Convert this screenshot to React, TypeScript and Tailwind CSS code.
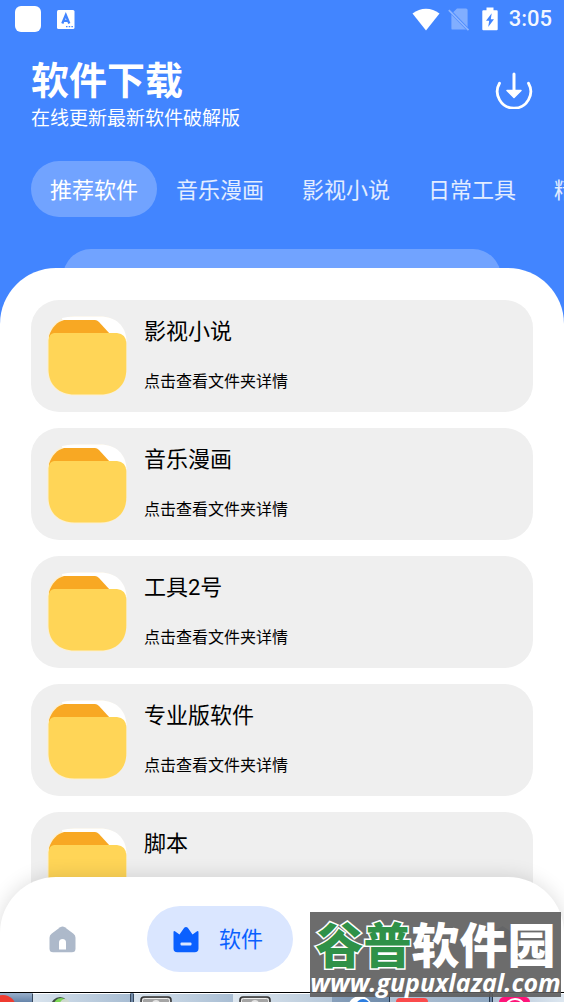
import { useState } from "react";

const TABS = ["推荐软件", "音乐漫画", "影视小说", "日常工具", "精品游戏"];
const FOLDERS = ["影视小说", "音乐漫画", "工具2号", "专业版软件", "脚本"];

function StatusBar() {
  return (
    <div className="flex h-[38px] items-center justify-between pl-[15px] pr-3">
      <div className="flex items-center gap-4">
        <span className="size-[26px] rounded-md bg-white" />
        <svg viewBox="0 0 18 19" className="h-[19px] w-[18px]" aria-hidden="true">
          <rect width="17.500" height="19" rx="1.500" fill="#fff" />
          <path d="M5.300 13.500 8.800 5l3.500 8.500M6.600 10.900h4.500" fill="none" stroke="#4285ff" strokeWidth="2.300" />
          <path d="M9 16.700h1.500M11.700 16.700h1.500M14.400 16.700h1.500" stroke="#4285ff" strokeWidth="1.200" />
        </svg>
      </div>
      <div className="flex items-center">
        <svg viewBox="0 0 28 23" className="h-[23px] w-7" aria-hidden="true">
          <path d="M.5 5.500C8.500-1 19.500-1 27.500 5.500L14 22.500Z" fill="#fff" />
        </svg>
        <svg viewBox="0 0 22 24" className="ml-2 h-6 w-[22px]" aria-hidden="true">
          <path d="M9 1.500h9a1.600 1.600 0 0 1 1.600 1.600v18.300a1.200 1.200 0 0 1-1.200 1.200H4.600A1.200 1.200 0 0 1 3.400 21.400V7Z" fill="#81aeff" />
          <path d="m1.500 3.500 19.500 20" stroke="#4285ff" strokeWidth="3" />
          <path d="m.8 3.200 19.700 20" stroke="#8db5ff" strokeWidth="1.700" />
        </svg>
        <svg viewBox="0 0 16 24" className="ml-3 h-6 w-4" aria-hidden="true">
          <path d="M4.500.5h7v2.700h3.200a1 1 0 0 1 1 1v18a1 1 0 0 1-1 1H1.300a1 1 0 0 1-1-1v-18a1 1 0 0 1 1-1h3.200Z" fill="#fff" />
          <path d="M9.700 6.200 4 13.700h3.200l-1 6.300L12 12.200H8.800Z" fill="#4285ff" />
        </svg>
        <span className="ml-[11px] font-[Roboto,sans-serif] text-[22px] font-medium leading-6 text-white/95">3:05</span>
      </div>
    </div>
  );
}

function FolderIcon() {
  return (
    <svg viewBox="0 0 80 80" className="size-20 shrink-0" aria-hidden="true">
      <rect x=".5" y=".5" width="79" height="79" rx="25" fill="#fdf0cf" />
      <path d="M15 2Q20 .5 27 .5h26C69 .5 79 10 79.500 25H20Z" fill="#fff" />
      <path d="M2 20C5 11 10 6 17 4h31q2 0 4 2l11 12-8 6H2Z" fill="#f8a823" />
      <path d="M1.500 24Q2 18 7 17h63q9 1 9.300 10v26.500C79.300 69 69 78.500 53.500 78.500h-26C12 78.500 1.500 69 1.500 53.500Z" fill="#ffd557" />
    </svg>
  );
}

function FolderCard({ name }: { name: string }) {
  return (
    <li>
      <button className="flex h-28 w-full cursor-pointer items-center rounded-[28px] bg-[#efefef] px-4 text-left text-black">
        <FolderIcon />
        <span className="ml-[17px] flex flex-col gap-6">
          <span className="text-[22px] leading-7">{name}</span>
          <span className="text-base leading-6">点击查看文件夹详情</span>
        </span>
      </button>
    </li>
  );
}

function BottomNav() {
  return (
    <nav className="relative z-10 -mt-16 flex shrink-0 items-center gap-[54px] rounded-t-[56px] bg-white px-[31px] pb-5 pt-[29px] shadow-[0_0_20px_rgba(0,0,0,0.14)]">
      <button aria-label="首页" className="flex w-[62px] shrink-0 cursor-pointer justify-center">
        <svg viewBox="0 0 27 27" className="size-[27px]">
          <path d="M11.200 1.200q2.300-1.500 4.600 0l8.700 6.500q2 1.500 2 4v11q0 3.600-3.600 3.600H4.100Q.5 26.300.5 22.700v-11q0-2.500 2-4Z" fill="#adb9ca" />
          <path d="M10 23.500v-7a3.500 3.500 0 0 1 7 0v7Z" fill="#fff" />
        </svg>
      </button>
      <button className="flex h-[66px] w-[146px] shrink-0 cursor-pointer items-center gap-5 rounded-full bg-[#dae6ff] pl-[26px] text-[22px] text-[#0a60ff]">
        <svg viewBox="0 0 26 27" className="h-[27px] w-[26px]" aria-hidden="true">
          <path d="M.5 6.500Q.5 4.300 2.300 5.600L6.500 8.500 11.200 1.800Q13 0 14.800 1.800L19.500 8.500l4.200-2.900q1.800-1.300 1.800.9v16q0 3.800-3.800 3.800H4.300Q.5 26.300.5 22.500Z" fill="#0a60ff" />
          <rect x="7.500" y="16.500" width="11" height="3" rx="1" fill="#dae6ff" />
        </svg>
        软件
      </button>
      <button aria-label="发现" className="flex w-[62px] shrink-0 cursor-pointer justify-center">
        <svg viewBox="0 0 27 27" className="size-[27px]">
          <circle cx="13.500" cy="13.500" r="12.500" fill="#adb9ca" />
        </svg>
      </button>
      <button aria-label="我的" className="ml-auto flex w-[62px] cursor-pointer justify-center">
        <svg viewBox="0 0 27 27" className="size-[27px]">
          <path d="M13.500 0 26 8v11l-12.500 8L1 19V8Z" fill="#adb9ca" />
        </svg>
      </button>
    </nav>
  );
}

function Taskbar() {
  return (
    <div className="relative z-10 flex h-[10px] shrink-0 overflow-hidden border-t border-black bg-[#6f89a8]">
      <div className="w-8 bg-linear-to-b from-[#9ab0cb] to-[#6685aa]">
        <svg viewBox="0 0 32 9" className="h-[9px] w-8" aria-hidden="true"><circle cx="3" cy="15" r="13" fill="#ef3b30" /></svg>
      </div>
      <div className="w-[99px] border-x border-t border-x-[#36485e] border-t-white bg-linear-to-r from-[#d9e4ee] to-[#a8bdd3]">
        <svg viewBox="0 0 60 9" className="h-[9px] w-[60px]" aria-hidden="true">
          <circle cx="27" cy="12" r="9" fill="#3f4d46" />
          <circle cx="28" cy="11" r="7" fill="#7ed957" />
          <circle cx="32" cy="10" r="5" fill="#cfdad0" />
        </svg>
      </div>
      <div className="ml-[2px] w-[100px] border-l border-t border-l-[#36485e] border-t-white bg-linear-to-r from-[#d9e4ee] to-[#a8bdd3] pl-[6px] pt-[2px]">
        <TrayApp />
      </div>
      <div className="w-[99px] border-t border-white bg-linear-to-r from-[#dfe8f0] to-[#b5c7d9] pl-[6px] pt-[2px]">
        <TrayApp />
      </div>
      <div className="w-[58px] border-r border-[#26384e] bg-linear-to-r from-[#88a0bb] to-[#6f8baa]">
        <svg viewBox="0 0 58 9" className="h-[9px] w-[58px]" aria-hidden="true">
          <circle cx="28" cy="15" r="12" fill="#fff" />
          <circle cx="31" cy="13" r="7" fill="#2b7de0" />
        </svg>
      </div>
      <div className="w-[100px] border-r border-t border-r-[#26384e] border-t-[#c6d4e2] bg-linear-to-r from-[#b3c4d6] to-[#93abc4] pl-[6px]">
        <div className="mt-1 h-4 w-8 rounded-t bg-[#fb4b4c]" />
      </div>
      <div className="ml-[2px] flex-1 border-l border-t border-l-[#26384e] border-t-white bg-linear-to-r from-[#b3c4d6] to-[#dde7f0] pl-[6px]">
        <svg viewBox="0 0 32 9" className="h-[9px] w-8" aria-hidden="true">
          <rect y="3" width="31" height="20" rx="5" fill="#ff1479" />
          <circle cx="16" cy="15" r="10" fill="none" stroke="#fff" strokeWidth="2" />
        </svg>
      </div>
    </div>
  );
}

function TrayApp() {
  return (
    <svg viewBox="0 0 32 7" className="h-[7px] w-8" aria-hidden="true">
      <rect x="1" y="1" width="30" height="20" rx="3" fill="#a5a5a5" stroke="#333" strokeWidth="1.500" />
      <rect x="2.500" y="2.500" width="27" height="18" rx="2" fill="none" stroke="#eee" />
      <circle cx="16" cy="8" r="4" fill="#e5e5e5" />
    </svg>
  );
}

function Watermark() {
  return (
    <div className="pointer-events-none absolute bottom-[5px] right-[3px] z-20 flex h-[85px] w-[251px] flex-col items-center whitespace-nowrap bg-[#5c5c5c]/90 pt-3 text-white">
      <div className="text-[48px] font-black leading-[46px]">
        <span className="text-[#2f9148] [-webkit-text-stroke:3px_white] [paint-order:stroke_fill]">谷普</span>软件园
      </div>
      <div className="font-['Open_Sans',sans-serif] text-[25px] font-bold italic leading-6">www.gupuxlazal.com</div>
    </div>
  );
}

export default function App() {
  const [active, setActive] = useState(TABS[0]);

  return (
    <div className="relative flex h-screen flex-col overflow-hidden bg-[#4285ff] font-[Roboto,'Noto_Sans_CJK_SC',sans-serif]">
      <header className="shrink-0 text-white">
        <StatusBar />
        <div className="flex items-center justify-between px-[31px] pt-5">
          <div>
            <h1 className="text-[38px] font-bold leading-[46px]">软件下载</h1>
            <p className="text-[19px] leading-[30px]">在线更新最新软件破解版</p>
          </div>
          <button aria-label="下载" className="-mt-3 cursor-pointer">
            <svg viewBox="0 0 38 38" className="size-[38px]" fill="none" stroke="#fff" strokeLinecap="round">
              <path d="M4.500 12.200a16.700 16.700 0 1 0 29 0" strokeWidth="2.800" />
              <path d="M19 3v16" strokeWidth="3" />
              <path d="M12 19.500h14l-7 7Z" fill="#fff" strokeWidth="1.500" strokeLinejoin="round" />
            </svg>
          </button>
        </div>
        <div className="mt-[27px] flex overflow-hidden pl-[31px]">
          {TABS.map(t => (
            <button key={t} onClick={() => setActive(t)}
              className={`h-14 shrink-0 cursor-pointer rounded-full px-[19px] pt-[2px] text-[22px] ${t === active ? "bg-white/25 text-white" : "text-white/85"}`}>{t}</button>
          ))}
        </div>
      </header>
      <div className="-mb-[37px] mt-8 mx-[63px] h-14 shrink-0 rounded-t-[28px] bg-white/25" />
      <main className="relative min-h-0 flex-1 overflow-hidden rounded-t-[56px] bg-white px-[31px] pt-8">
        <ul className="flex flex-col gap-4">
          {FOLDERS.map(f => <FolderCard key={f} name={f} />)}
        </ul>
      </main>
      <BottomNav />
      <Taskbar />
      <Watermark />
    </div>
  );
}
